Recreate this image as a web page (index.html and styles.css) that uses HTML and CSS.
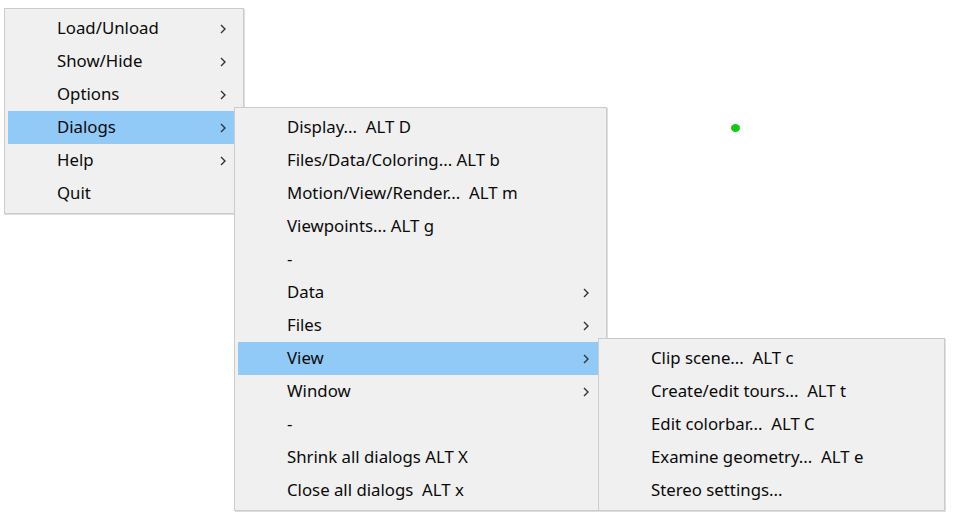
FILE: index.html
```html
<!DOCTYPE html>
<html>
<head>
<meta charset="utf-8">
<link rel="stylesheet" href="styles.css">
</head>
<body>
<div class="canvas">
  <span class="dot"></span>

  <div class="menu m1">
    <div class="item"><span class="label">Load/Unload</span><svg class="chev" viewBox="0 0 6 10"><polyline points="1,1 5,5 1,9"/></svg></div>
    <div class="item"><span class="label">Show/Hide</span><svg class="chev" viewBox="0 0 6 10"><polyline points="1,1 5,5 1,9"/></svg></div>
    <div class="item"><span class="label">Options</span><svg class="chev" viewBox="0 0 6 10"><polyline points="1,1 5,5 1,9"/></svg></div>
    <div class="item active"><span class="label">Dialogs</span><svg class="chev" viewBox="0 0 6 10"><polyline points="1,1 5,5 1,9"/></svg></div>
    <div class="item"><span class="label">Help</span><svg class="chev" viewBox="0 0 6 10"><polyline points="1,1 5,5 1,9"/></svg></div>
    <div class="item"><span class="label">Quit</span></div>
  </div>

  <div class="menu m2">
    <div class="item"><span class="label">Display...  ALT D</span></div>
    <div class="item"><span class="label">Files/Data/Coloring... ALT b</span></div>
    <div class="item"><span class="label">Motion/View/Render...  ALT m</span></div>
    <div class="item"><span class="label">Viewpoints... ALT g</span></div>
    <div class="item"><span class="label">-</span></div>
    <div class="item"><span class="label">Data</span><svg class="chev" viewBox="0 0 6 10"><polyline points="1,1 5,5 1,9"/></svg></div>
    <div class="item"><span class="label">Files</span><svg class="chev" viewBox="0 0 6 10"><polyline points="1,1 5,5 1,9"/></svg></div>
    <div class="item active"><span class="label">View</span><svg class="chev" viewBox="0 0 6 10"><polyline points="1,1 5,5 1,9"/></svg></div>
    <div class="item"><span class="label">Window</span><svg class="chev" viewBox="0 0 6 10"><polyline points="1,1 5,5 1,9"/></svg></div>
    <div class="item"><span class="label">-</span></div>
    <div class="item"><span class="label">Shrink all dialogs ALT X</span></div>
    <div class="item"><span class="label">Close all dialogs  ALT x</span></div>
  </div>

  <div class="menu m3">
    <div class="item"><span class="label">Clip scene...  ALT c</span></div>
    <div class="item"><span class="label">Create/edit tours...  ALT t</span></div>
    <div class="item"><span class="label">Edit colorbar...  ALT C</span></div>
    <div class="item"><span class="label">Examine geometry...  ALT e</span></div>
    <div class="item"><span class="label">Stereo settings...</span></div>
  </div>
</div>
</body>
</html>
```

FILE: styles.css
```css
html, body {
  margin: 0;
  padding: 0;
  background: #ffffff;
}

.canvas {
  position: relative;
  width: 954px;
  height: 521px;
  overflow: hidden;
  font-family: "Noto Sans", "Open Sans", sans-serif;
  font-size: 16.8px;
  color: #0a0a0a;
}

.dot {
  position: absolute;
  left: 731px;
  top: 124px;
  width: 9px;
  height: 8px;
  border-radius: 50%;
  background: #14c814;
}

.menu {
  position: absolute;
  box-sizing: border-box;
  background: #f0f0f0;
  border: 1px solid #cccccc;
  padding: 3px;
  box-shadow: 1px 1px 0 #dedede;
  display: flex;
  flex-direction: column;
}

.m1 { left: 4px;   top: 8px;   width: 240px; }
.m2 { left: 234px; top: 107px; width: 373px; }
.m3 { left: 598px; top: 338px; width: 347px; }

.item {
  height: 33px;
  display: flex;
  align-items: center;
  padding-left: 49px;
  padding-right: 14px;
}

.item.active {
  background: #91c9f7;
}

.label {
  flex: 1;
  white-space: pre;
  line-height: 1;
  margin-top: -1px;
}

.chev {
  width: 6px;
  height: 10px;
  fill: none;
  stroke: #333;
  stroke-width: 1.4;
}
```
